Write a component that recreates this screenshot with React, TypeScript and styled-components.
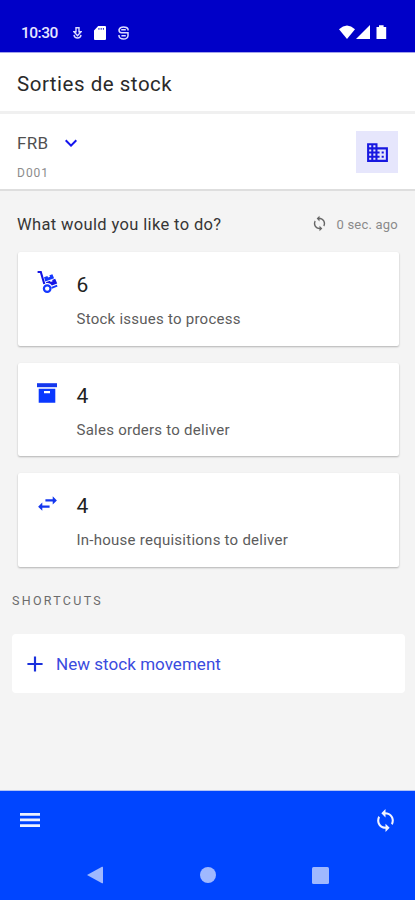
import React from "react";
import styled, { createGlobalStyle } from "styled-components";
import { MdAdd, MdBusiness, MdKeyboardArrowDown, MdSwapHoriz, MdSync } from "react-icons/md";

const GlobalStyle = createGlobalStyle`
  * { box-sizing: border-box; }
  body { margin: 0; background: #f4f4f4; font-family: Roboto, sans-serif; }
  svg { display: block; flex: none; }
  h1 { margin: 0; }
  button { font: inherit; border: 0; padding: 0; background: none; }
`;

const Screen = styled.div`
  height: 900px;
  display: flex;
  flex-direction: column;
  background: #f4f4f4;
  overflow: hidden;
`;

const Label = styled.span<{ $size: number; $color: string; $line: number; $track?: number; $weight?: number }>`
  font-size: ${(p) => p.$size}px;
  color: ${(p) => p.$color};
  line-height: ${(p) => p.$line}px;
  letter-spacing: ${(p) => p.$track ?? 0}px;
  font-weight: ${(p) => p.$weight ?? 400};
  white-space: nowrap;
`;

const StatusBar = styled.header`
  height: 53px;
  flex: none;
  padding: 13px 28px 0 21px;
  display: flex;
  align-items: center;
  justify-content: space-between;
  background: #0000c8;
  border-bottom: 1px solid #a3a3ea;
`;

const StatusGroup = styled.div`
  display: flex;
  align-items: center;
`;

const StatusIcons = styled.div`
  display: flex;
  align-items: center;
  gap: 12px;
  margin-left: 15px;
`;

const TitleBar = styled.div`
  height: 61px;
  flex: none;
  padding: 3px 17px 0;
  display: flex;
  align-items: center;
  background: #fff;
  border-bottom: 3px solid #f0f0f0;
`;

const SiteBar = styled.section`
  height: 77px;
  flex: none;
  padding: 17px 17px 0;
  display: flex;
  justify-content: space-between;
  background: #fff;
  border-bottom: 2px solid #dedede;
`;

const SiteInfo = styled.div`
  display: flex;
  flex-direction: column;
  gap: 8px;
`;

const SiteSelect = styled.button`
  display: flex;
  align-items: center;
  gap: 11px;
  color: #1414ee;
`;

const SiteButton = styled.button`
  width: 42px;
  height: 42px;
  display: grid;
  place-items: center;
  background: #e6e6fc;
  color: #1717e0;
`;

const Prompt = styled.div`
  height: 61px;
  flex: none;
  padding: 7px 17px 0;
  display: flex;
  align-items: center;
  justify-content: space-between;
`;

const Refreshed = styled.div`
  display: flex;
  align-items: center;
  gap: 8px;
  color: #666;

  svg {
    margin-bottom: 3px;
  }
`;

const CardList = styled.main`
  display: flex;
  flex-direction: column;
  gap: 17px;
  padding: 0 16.5px 0 17.5px;
`;

const Card = styled.article`
  height: 93.6px;
  padding: 17px 17px 0;
  display: grid;
  grid-template-columns: 25px 1fr;
  column-gap: 17px;
  background: #fff;
  border-radius: 2px;
  box-shadow: 0 1px 2px rgba(0, 0, 0, 0.27);
`;

const CardIcon = styled.div`
  height: 26px;
  display: grid;
  place-items: center;
  color: #1437ee;
`;

const CardText = styled.div`
  display: flex;
  flex-direction: column;
  gap: 9px;
  padding-top: 3px;
`;

const SectionTitle = styled.div`
  padding: 24px 12px 0;
  display: flex;
`;

const Shortcut = styled.button`
  height: 59px;
  flex: none;
  margin: 23px 10px 0 12px;
  padding: 1px 10px 0;
  display: flex;
  align-items: center;
  gap: 8px;
  background: #fff;
  border-radius: 4px;
  color: #1a30dc;
`;

const Footer = styled.footer`
  height: 110px;
  flex: none;
  margin-top: auto;
  background: #0045ff;
  border-top: 1px solid #b3c3f4;
`;

const Toolbar = styled.nav`
  height: 56px;
  padding: 2px 17px 0 20px;
  display: flex;
  align-items: center;
  justify-content: space-between;
  color: #f2f4ff;
`;

const SystemNav = styled.div`
  height: 53px;
  padding: 3px 86px 0 87px;
  display: flex;
  align-items: center;
  justify-content: space-between;
`;

const DollyIcon = () => (
  <svg width="26" height="26" viewBox="0 0 26 26" fill="none">
    <path d="M2.6 3H5.8L9.3 15" stroke="#1414e4" strokeWidth="2.1" />
    <circle cx="12.2" cy="19.6" r="3.3" stroke="#1437ff" strokeWidth="2.2" />
    <path d="M9 8.3l3.4-1.2.6 1.4 2-.7-.6-1.5 3-1.1 1.7 4-8.8 3.2z" fill="#1437ff" />
    <path d="M10.7 13.3l4.4-1.6.5 1.3 2-.7-.5-1.4 3.1-1.1 2 4.6-5.4 2c-1-1.7-3-2.9-5.5-2.3z" fill="#1414e4" />
    <path d="M16.6 18.8l5.6-2.1" stroke="#1437ff" strokeWidth="1.9" />
  </svg>
);

const ArchiveIcon = () => (
  <svg width="20" height="20" viewBox="0 0 20 20">
    <path d="M0 .2h20v4H0z" fill="#1437ee" />
    <path fillRule="evenodd" d="M1.7 5.8h16.6v14H1.7zM7 8.1v2.1h6V8.1z" fill="#0a38ff" />
  </svg>
);

const DownloadIcon = () => (
  <svg width="9" height="12" viewBox="0 0 9 12" fill="none" stroke="#dcdcff" strokeWidth="1.4">
    <path d="M3 .8h3v4h2L4.5 8.6 1 4.8h2z" />
    <path d="M1 7.8Q1.4 11 4.5 11T8 7.8" />
  </svg>
);

const SdCardIcon = () => (
  <svg width="12" height="14" viewBox="0 0 12 14">
    <path fillRule="evenodd" d="M4.2 0H11q1 0 1 1v12q0 1-1 1H1q-1 0-1-1V4.5zM4.5 2v1.8h.9V2zm2.2 0v1.8h.9V2zm2.2 0v1.8h.9V2z" fill="#fff" />
  </svg>
);

const SyncBadgeIcon = () => (
  <svg width="11" height="14" viewBox="0 0 11 14" fill="none" stroke="#dcdcff" strokeWidth="1.5">
    <path d="M10 4.6V3Q9 1 5.5 1T1 3.8Q1 6.8 3.6 6.8H10v3Q9.4 13 5.5 13T1 10.2V9" />
    <path d="M3.2 3.8h4.6M3.4 9.8h4.4" />
  </svg>
);

const SignalIcons = () => (
  <svg width="48" height="15" viewBox="0 0 48 15" fill="#fff">
    <path d="M0 4.2Q8 -3.2 16 4.2L8 14z" />
    <path d="M31 0v14H17z" />
    <path d="M37.5 2H40V.3h4.6V2h2.6v12h-9.7z" />
  </svg>
);

const MenuIcon = () => (
  <svg width="20" height="14" viewBox="0 0 20 14" fill="#eef1ff">
    <path d="M0 0h20v2.7H0zM0 5.6h20v2.7H0zM0 11.2h20v2.7H0z" />
  </svg>
);

const BackIcon = () => (
  <svg width="16" height="18" viewBox="0 0 16 18" fill="#9fb8ff">
    <path d="M0 9L15 .8q1-.5 1 .5v15.4q0 1-1 .5z" />
  </svg>
);

const HomeIcon = () => (
  <svg width="16" height="16" viewBox="0 0 16 16" fill="#9fb8ff">
    <circle cx="8" cy="8" r="8" />
  </svg>
);

const RecentsIcon = () => (
  <svg width="17" height="17" viewBox="0 0 17 17" fill="#9fb8ff">
    <rect width="17" height="17" rx="1.5" />
  </svg>
);

const cards = [
  { icon: <DollyIcon />, count: 6, label: "Stock issues to process" },
  { icon: <ArchiveIcon />, count: 4, label: "Sales orders to deliver" },
  { icon: <MdSwapHoriz size={25} />, count: 4, label: "In-house requisitions to deliver" },
];

export default function App() {
  return (
    <Screen>
      <GlobalStyle />
      <StatusBar>
        <StatusGroup>
          <Label $size={15.5} $color="#e6e6ff" $line={20} $weight={500} $track={-0.5}>10:30</Label>
          <StatusIcons>
            <DownloadIcon />
            <SdCardIcon />
            <SyncBadgeIcon />
          </StatusIcons>
        </StatusGroup>
        <SignalIcons />
      </StatusBar>
      <TitleBar>
        <Label as="h1" $size={20.5} $color="#2a2a2a" $line={28} $track={0.52}>Sorties de stock</Label>
      </TitleBar>
      <SiteBar>
        <SiteInfo>
          <SiteSelect>
            <Label $size={17} $color="#505050" $line={24} $track={0.3}>FRB</Label>
            <MdKeyboardArrowDown size={24} />
          </SiteSelect>
          <Label $size={12} $color="#8c8c8c" $line={20} $track={1}>D001</Label>
        </SiteInfo>
        <SiteButton aria-label="Site"><MdBusiness size={25} /></SiteButton>
      </SiteBar>
      <Prompt>
        <Label $size={16.5} $color="#363636" $line={24} $track={0.36}>What would you like to do?</Label>
        <Refreshed>
          <MdSync size={17} />
          <Label $size={13} $color="#8a8a8a" $line={20} $track={0.22}>0 sec. ago</Label>
        </Refreshed>
      </Prompt>
      <CardList>
        {cards.map((card) => (
          <Card key={card.label}>
            <CardIcon>{card.icon}</CardIcon>
            <CardText>
              <Label $size={21} $color="#222" $line={26}>{card.count}</Label>
              <Label $size={15} $color="#5c5c5c" $line={24} $track={0.25}>{card.label}</Label>
            </CardText>
          </Card>
        ))}
      </CardList>
      <SectionTitle>
        <Label $size={12.5} $color="#6c6c6c" $line={20} $track={2.28}>SHORTCUTS</Label>
      </SectionTitle>
      <Shortcut>
        <MdAdd size={26} />
        <Label $size={17} $color="#3a4bde" $line={24} $track={0.04}>New stock movement</Label>
      </Shortcut>
      <Footer>
        <Toolbar>
          <MenuIcon />
          <MdSync size={25} />
        </Toolbar>
        <SystemNav>
          <BackIcon />
          <HomeIcon />
          <RecentsIcon />
        </SystemNav>
      </Footer>
    </Screen>
  );
}
